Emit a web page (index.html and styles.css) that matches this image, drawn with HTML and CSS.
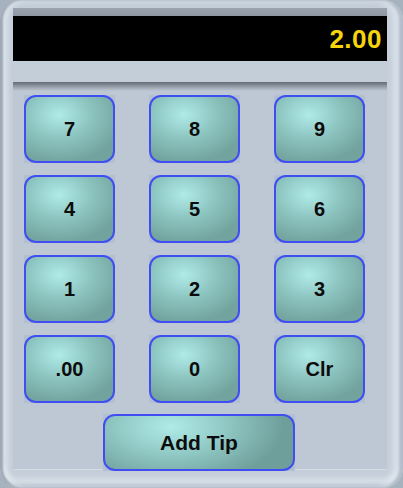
FILE: index.html
```html
<!DOCTYPE html>
<html lang="en">
<head>
    <meta charset="UTF-8">
    <meta name="viewport" content="width=device-width, initial-scale=1.0">
    <title>Tip Pad</title>
    <link rel="stylesheet" href="styles.css">
</head>
<body>
    <div class="frame">

        <div class="display">
            <div class="readout">2.00</div>
        </div>

        <div class="keypad">
            <div class="keys">
                <div class="cell"><button class="key">7</button></div>
                <div class="cell"><button class="key">8</button></div>
                <div class="cell"><button class="key">9</button></div>
                <div class="cell"><button class="key">4</button></div>
                <div class="cell"><button class="key">5</button></div>
                <div class="cell"><button class="key">6</button></div>
                <div class="cell"><button class="key">1</button></div>
                <div class="cell"><button class="key">2</button></div>
                <div class="cell"><button class="key">3</button></div>
                <div class="cell"><button class="key">.00</button></div>
                <div class="cell"><button class="key">0</button></div>
                <div class="cell"><button class="key">Clr</button></div>
            </div>
            <div class="tip-row">
                <div class="cell wide"><button class="key">Add Tip</button></div>
            </div>
        </div>

    </div>
</body>
</html>
```

FILE: styles.css
```css
body {
    margin: 0;
    background: #a7b2bf;
    font-family: "Liberation Sans", Arial, sans-serif;
}

/* outer frame */
.frame {
    width: 403px;
    height: 488px;
    box-sizing: border-box;
    padding: 8px 16px 0 13px;
    border-radius: 20px;
    background: #c4ced9;
    box-shadow:
        inset 3px 0 2px rgba(120,132,148,0.6),
        inset 8px 0 5px rgba(240,245,250,0.5),
        inset -4px 0 3px rgba(150,162,178,0.6),
        inset -10px 0 6px rgba(235,241,248,0.6),
        inset 0 -4px 3px rgba(150,162,178,0.5),
        inset 0 -10px 6px rgba(235,241,248,0.5);
    overflow: hidden;
}

/* display */
.display {
    padding-top: 8px;
    background: linear-gradient(#9aa3ae, #6b737d 60%, #4a5058);
}
.display .readout {
    height: 45px;
    background: #000;
    color: #f6d40c;
    font-size: 26px;
    font-weight: bold;
    text-align: right;
    line-height: 47px;
    padding-right: 5px;
    letter-spacing: 0.5px;
}

/* keypad */
.keypad {
    margin-top: 21px;
    height: 388px;
    box-sizing: border-box;
    padding: 13px 11px 0 11px;
    background:
        linear-gradient(#636b75, #98a1ac 5px, #bec8d4 9px) top / 100% 9px no-repeat,
        #bec8d4;
    border-bottom: 1px solid #d4dce6;
}
.keypad .keys {
    display: grid;
    grid-template-columns: 91px 91px 91px;
    grid-auto-rows: 68px;
    column-gap: 34px;
    row-gap: 12px;
}
.keypad .cell {
    background: #b2bfd2;
}
.keypad .tip-row {
    display: flex;
    justify-content: center;
    margin-top: 11px;
    padding-right: 2px;
}
.keypad .cell.wide {
    width: 192px;
    height: 57px;
}
.keypad .key {
    width: 100%;
    height: 100%;
    margin: 0;
    padding: 0;
    border: 2px solid #3f4df2;
    border-radius: 12px;
    background:
        radial-gradient(ellipse 75% 75% at 38% 28%, #b0ebe8 0%, #8fc7c3 45%, #72a39e 100%);
    color: #0c0c0c;
    font-family: "Liberation Sans", Arial, sans-serif;
    font-size: 20px;
    font-weight: bold;
    cursor: pointer;
}
.keypad .wide .key {
    background:
        radial-gradient(ellipse 60% 110% at 35% 20%, #b0ebe8 0%, #8fc7c3 50%, #6f9f9b 100%);
    font-size: 21px;
}
```
